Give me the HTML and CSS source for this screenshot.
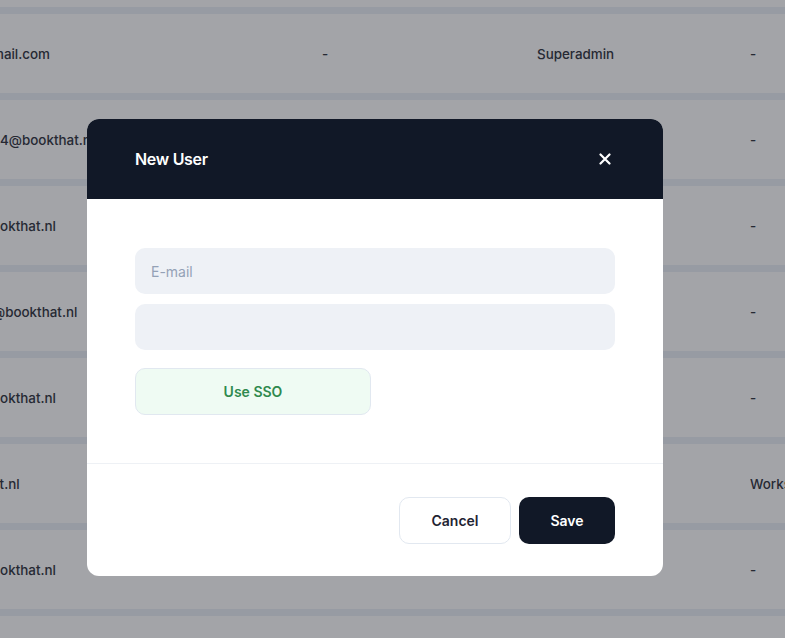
FILE: index.html
```html
<!DOCTYPE html>
<html lang="en">
<head>
<meta charset="utf-8">
<title>New User</title>
<link rel="stylesheet" href="styles.css">
</head>
<body>
<div class="page">
  <div class="table">
    <div class="row row-top"></div>
    <div class="row"><div class="cell">mail.com</div><div class="cell">-</div><div class="cell">Superadmin</div><div class="cell">-</div></div>
    <div class="row"><div class="cell">n4@bookthat.nl</div><div class="cell">-</div><div class="cell">Admin</div><div class="cell">-</div></div>
    <div class="row"><div class="cell">ookthat.nl</div><div class="cell">-</div><div class="cell">Admin</div><div class="cell">-</div></div>
    <div class="row"><div class="cell">@bookthat.nl</div><div class="cell">-</div><div class="cell">Admin</div><div class="cell">-</div></div>
    <div class="row"><div class="cell">ookthat.nl</div><div class="cell">-</div><div class="cell">Admin</div><div class="cell">-</div></div>
    <div class="row"><div class="cell">at.nl</div><div class="cell">-</div><div class="cell">Admin</div><div class="cell">Workspace admin</div></div>
    <div class="row"><div class="cell">ookthat.nl</div><div class="cell">-</div><div class="cell">Admin</div><div class="cell">-</div></div>
    <div class="row"></div>
  </div>

  <div class="modal">
    <div class="modal-header">
      <span class="modal-title">New User</span>
      <svg class="close" width="12" height="12" viewBox="0 0 12 12" aria-hidden="true"><path d="M1.5 1.5 L10.5 10.5 M10.5 1.5 L1.5 10.5" stroke="#ffffff" stroke-width="2.2" stroke-linecap="round"/></svg>
    </div>
    <div class="modal-body">
      <div class="field">E-mail</div>
      <div class="field"></div>
      <button class="btn-sso">Use SSO</button>
    </div>
    <div class="modal-footer">
      <button class="btn btn-cancel">Cancel</button>
      <button class="btn btn-save">Save</button>
    </div>
  </div>
</div>
</body>
</html>
```
FILE: styles.css
```css
* { box-sizing: border-box; }
html, body {
  margin: 0;
  padding: 0;
  width: 785px;
  height: 638px;
  overflow: hidden;
  background: #a3a4a8;
  font-family: Inter, "Noto Sans", sans-serif;
}
.page {
  position: relative;
  width: 785px;
  height: 638px;
  overflow: hidden;
}
.table {
  display: flex;
  flex-direction: column;
  gap: 7px;
  background: #979ba3;
  margin-left: -8px;
}
.row {
  display: grid;
  grid-template-columns: 330px 215px 213px 1fr;
  align-items: center;
  height: 79px;
  flex-shrink: 0;
  background: #a3a4a8;
  color: #262933;
  font-size: 13.4px;
  font-weight: 500;
  white-space: nowrap;
}
.row-top { height: 7px; }
.cell { overflow: hidden; }

.modal {
  position: absolute;
  left: 87px;
  top: 119px;
  width: 576px;
  background: #ffffff;
  border-radius: 12px;
  overflow: hidden;
}
.modal-header {
  height: 80px;
  background: #111827;
  display: flex;
  align-items: center;
  justify-content: space-between;
  padding: 0 52px 0 48px;
}
.modal-title {
  color: #ffffff;
  font-size: 16px;
  font-weight: 600;
  letter-spacing: -0.3px;
}
.close { display: block; }
.modal-body {
  padding: 49px 48px 48px 48px;
  display: flex;
  flex-direction: column;
  gap: 10px;
  border-bottom: 1px solid #eef1f5;
}
.field {
  height: 46px;
  background: #eef1f6;
  border-radius: 10px;
  padding: 0 16px;
  display: flex;
  align-items: center;
  color: #94a1b6;
  font-size: 14px;
}
.btn-sso {
  margin-top: 8px;
  width: 236px;
  height: 47px;
  background: #effbf3;
  border: 1.5px solid #e1e8f0;
  border-radius: 10px;
  color: #2f8a4e;
  font-family: inherit;
  font-size: 14px;
  font-weight: 600;
}
.modal-footer {
  display: flex;
  justify-content: flex-end;
  gap: 8px;
  padding: 33px 48px 32px 48px;
}
.btn {
  height: 47px;
  border-radius: 10px;
  font-family: inherit;
  font-size: 14px;
  font-weight: 600;
}
.btn-cancel {
  width: 112px;
  background: #ffffff;
  border: 1.5px solid #e2e8f0;
  color: #1f2433;
}
.btn-save {
  width: 96px;
  background: #111827;
  border: none;
  color: #ffffff;
}
```
